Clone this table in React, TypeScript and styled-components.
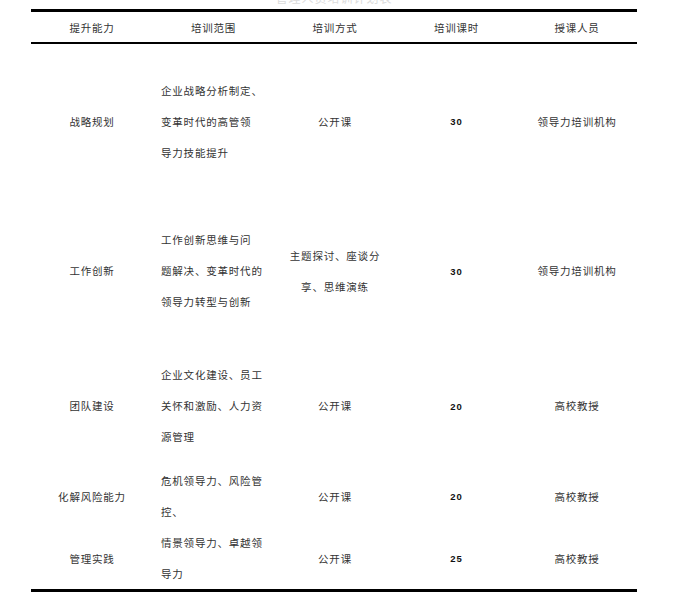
import React from "react";
import styled, { createGlobalStyle } from "styled-components";

const GlobalStyle = createGlobalStyle`
  html, body {
    margin: 0;
    padding: 0;
    background: #ffffff;
  }
  body {
    font-family: "Noto Sans CJK SC", "Noto Sans", sans-serif;
    color: #1a1a1a;
  }
`;

const COLS = "122px 121px 122px 121px 120px";

const Page = styled.div`
  width: 606px;
  padding-left: 31px;
`;

const Caption = styled.div`
  height: 9px;
  overflow: hidden;
  display: flex;
  align-items: flex-end;
  justify-content: center;
`;

const CaptionText = styled.div`
  font-size: 12px;
  line-height: 12px;
  color: #dcdcdc;
  letter-spacing: 1px;
  margin-bottom: 5px;
`;

const Table = styled.div`
  border-top: 3px solid #000;
  border-bottom: 3px solid #000;
`;

const HeaderRow = styled.div`
  display: grid;
  grid-template-columns: ${COLS};
  height: 30px;
  border-bottom: 2px solid #000;
  align-items: center;
`;

const HeadCell = styled.div`
  text-align: center;
  font-size: 10.5px;
  letter-spacing: 0.8px;
  color: #333;
`;

const BodyRow = styled.div<{ $pt: number; $pb: number }>`
  display: grid;
  grid-template-columns: ${COLS};
  padding-top: ${(p) => p.$pt}px;
  padding-bottom: ${(p) => p.$pb}px;
`;

const Cell = styled.div<{ $left?: boolean }>`
  display: flex;
  flex-direction: column;
  justify-content: center;
  align-items: ${(p) => (p.$left ? "flex-start" : "center")};
  padding-left: ${(p) => (p.$left ? "8px" : "0")};
  font-size: 10.5px;
  letter-spacing: 0.8px;
  color: #333;
`;

const Line = styled.div`
  line-height: 31px;
  white-space: nowrap;
`;

const Num = styled.span`
  font-family: "Liberation Sans", Arial, sans-serif;
  font-size: 9.5px;
  font-weight: 700;
  letter-spacing: 1px;
  color: #111;
`;

type Row = {
  ability: string;
  range: string[];
  method: string[];
  hours: string;
  teacher: string;
  pt: number;
  pb: number;
};

const rows: Row[] = [
  {
    ability: "战略规划",
    range: ["企业战略分析制定、", "变革时代的高管领", "导力技能提升"],
    method: ["公开课"],
    hours: "30",
    teacher: "领导力培训机构",
    pt: 30.5,
    pb: 28,
  },
  {
    ability: "工作创新",
    range: ["工作创新思维与问", "题解决、变革时代的", "领导力转型与创新"],
    method: ["主题探讨、座谈分", "享、思维演练"],
    hours: "30",
    teacher: "领导力培训机构",
    pt: 28.5,
    pb: 21,
  },
  {
    ability: "团队建设",
    range: ["企业文化建设、员工", "关怀和激励、人力资", "源管理"],
    method: ["公开课"],
    hours: "20",
    teacher: "高校教授",
    pt: 21,
    pb: 13,
  },
  {
    ability: "化解风险能力",
    range: ["危机领导力、风险管", "控、"],
    method: ["公开课"],
    hours: "20",
    teacher: "高校教授",
    pt: 0,
    pb: 0,
  },
  {
    ability: "管理实践",
    range: ["情景领导力、卓越领", "导力"],
    method: ["公开课"],
    hours: "25",
    teacher: "高校教授",
    pt: 0,
    pb: 0,
  },
];

const headers = ["提升能力", "培训范围", "培训方式", "培训课时", "授课人员"];

export default function App() {
  return (
    <>
      <GlobalStyle />
      <Page>
        <Caption>
          <CaptionText>管理人员培训计划表</CaptionText>
        </Caption>
        <Table>
          <HeaderRow>
            {headers.map((h) => (
              <HeadCell key={h}>{h}</HeadCell>
            ))}
          </HeaderRow>
          {rows.map((r) => (
            <BodyRow key={r.ability} $pt={r.pt} $pb={r.pb}>
              <Cell>
                <Line>{r.ability}</Line>
              </Cell>
              <Cell $left>
                {r.range.map((l) => (
                  <Line key={l}>{l}</Line>
                ))}
              </Cell>
              <Cell>
                {r.method.map((l) => (
                  <Line key={l}>{l}</Line>
                ))}
              </Cell>
              <Cell>
                <Line>
                  <Num>{r.hours}</Num>
                </Line>
              </Cell>
              <Cell>
                <Line>{r.teacher}</Line>
              </Cell>
            </BodyRow>
          ))}
        </Table>
      </Page>
    </>
  );
}
